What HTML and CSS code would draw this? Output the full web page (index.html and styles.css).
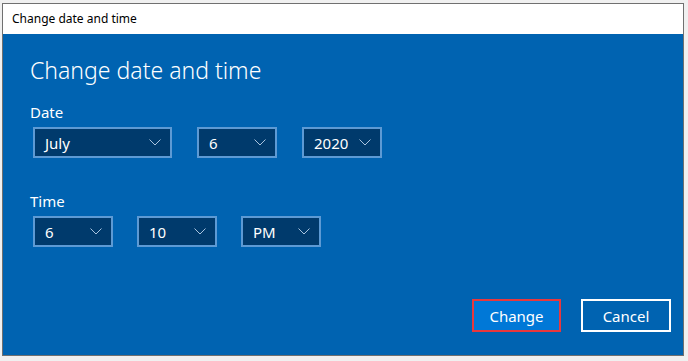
FILE: index.html
```html
<!DOCTYPE html>
<html lang="en">

<head>
    <meta charset="UTF-8">
    <meta name="viewport" content="width=device-width, initial-scale=1.0">
    <title>Change date and time</title>
    <link rel="stylesheet" href="styles.css">
</head>

<body>
    <div class="window">
        <div class="titleBar">Change date and time</div>
        <div class="content">
            <h1>Change date and time</h1>

            <div class="label">Date</div>
            <div class="row">
                <div class="select month"><span>July</span><svg width="12" height="7" viewBox="0 0 12 7"><polyline points="0.5,0.5 6,6 11.5,0.5" /></svg></div>
                <div class="select"><span>6</span><svg width="12" height="7" viewBox="0 0 12 7"><polyline points="0.5,0.5 6,6 11.5,0.5" /></svg></div>
                <div class="select"><span>2020</span><svg width="12" height="7" viewBox="0 0 12 7"><polyline points="0.5,0.5 6,6 11.5,0.5" /></svg></div>
            </div>

            <div class="label time">Time</div>
            <div class="row timeRow">
                <div class="select"><span>6</span><svg width="12" height="7" viewBox="0 0 12 7"><polyline points="0.5,0.5 6,6 11.5,0.5" /></svg></div>
                <div class="select"><span>10</span><svg width="12" height="7" viewBox="0 0 12 7"><polyline points="0.5,0.5 6,6 11.5,0.5" /></svg></div>
                <div class="select"><span>PM</span><svg width="12" height="7" viewBox="0 0 12 7"><polyline points="0.5,0.5 6,6 11.5,0.5" /></svg></div>
            </div>

            <div class="buttons">
                <button class="btn primary">Change</button>
                <button class="btn">Cancel</button>
            </div>
        </div>
    </div>
</body>

</html>
```

FILE: styles.css
```css
* {
    margin: 0;
    padding: 0;
    box-sizing: border-box;
}

body {
    height: 100vh;
    background-color: #f0f0f0;
    font-family: "Noto Sans", "Open Sans", sans-serif;
    padding: 3px 4px 5px 2px;
}

.window {
    height: 353px;
    border: 1px solid #707070;
    display: flex;
    flex-direction: column;
}

.titleBar {
    height: 30px;
    background-color: #fff;
    color: #000;
    font-size: 12px;
    line-height: 30px;
    padding-left: 9px;
}

.content {
    flex: 1;
    background-color: #0063b1;
    color: #fff;
    padding: 20px 12px 23px 27px;
    display: flex;
    flex-direction: column;
}

h1 {
    font-size: 23px;
    font-weight: 300;
    line-height: 32px;
    margin-bottom: 16px;
}

.label {
    font-size: 15px;
    line-height: 20px;
    margin-bottom: 5px;
}

.label.time {
    margin-top: 33px;
}

.row {
    display: flex;
    gap: 25px;
    margin-left: 3px;
}

.timeRow {
    gap: 24px;
}

.select {
    width: 80px;
    height: 31px;
    border: 2px solid #5d9ad4;
    background-color: #003a6c;
    display: flex;
    align-items: center;
    justify-content: space-between;
    padding: 0 9px 0 10px;
    font-size: 15px;
}

.select.month {
    width: 139px;
}

.select svg {
    fill: none;
    stroke: #a9c3de;
    stroke-width: 1;
}

.buttons {
    margin-top: auto;
    display: flex;
    justify-content: flex-end;
    gap: 20px;
}

.btn {
    width: 90px;
    height: 33px;
    border: 2px solid #fff;
    background-color: transparent;
    color: #fff;
    font-family: inherit;
    font-size: 15px;
}

.btn.primary {
    width: 89px;
    border-color: #e8383d;
    background-color: #0078d7;
}
```
